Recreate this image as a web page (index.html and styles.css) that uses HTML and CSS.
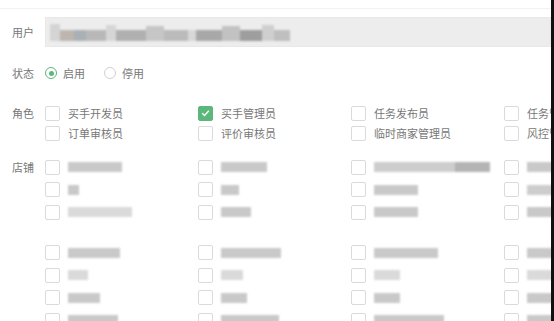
FILE: index.html
```html
<!DOCTYPE html>
<html lang="zh">
<head>
    <meta charset="UTF-8">
    <title>用户设置</title>
    <link rel="stylesheet" href="styles.css">
</head>
<body>
<div class="page">
    <div class="topline"></div>

    <div class="row row-user">
        <div class="label">用户</div>
        <div class="input">
            <div class="mosaic">
                <span class="m1"></span><span class="m2"></span><span class="m3"></span><span class="m4"></span>
                <span class="m5"></span><span class="m6"></span><span class="m7"></span><span class="m8"></span>
                <span class="m9"></span><span class="m10"></span><span class="m11"></span><span class="m12"></span>
                <span class="m13"></span><span class="m14"></span>
            </div>
        </div>
    </div>

    <div class="row row-status">
        <div class="label">状态</div>
        <label class="radio on"><span class="dot"></span>启用</label>
        <label class="radio"><span class="dot"></span>停用</label>
    </div>

    <div class="row row-role">
        <div class="label">角色</div>
        <div class="grid">
            <div class="item"><span class="box"></span>买手开发员</div>
            <div class="item"><span class="box checked"><svg viewBox="0 0 14 14" width="14" height="14"><path d="M3.5 7.2 L6 9.6 L10.6 4.6" fill="none" stroke="#fff" stroke-width="1.5"/></svg></span>买手管理员</div>
            <div class="item"><span class="box"></span>任务发布员</div>
            <div class="item"><span class="box"></span>任务管理员</div>
            <div class="item"><span class="box"></span>订单审核员</div>
            <div class="item"><span class="box"></span>评价审核员</div>
            <div class="item"><span class="box"></span>临时商家管理员</div>
            <div class="item"><span class="box"></span>风控管理员</div>
        </div>
    </div>

    <div class="row row-store">
        <div class="label">店铺</div>
        <div>
            <div class="grid store">
                <div class="item"><span class="box"></span><span class="bar" style="width:54px"></span></div>
                <div class="item"><span class="box"></span><span class="bar" style="width:46px"></span></div>
                <div class="item"><span class="box"></span><span class="bar dark" style="width:116px"></span></div>
                <div class="item"><span class="box"></span><span class="bar" style="width:40px"></span></div>
                <div class="item"><span class="box"></span><span class="bar" style="width:11px"></span></div>
                <div class="item"><span class="box"></span><span class="bar" style="width:18px"></span></div>
                <div class="item"><span class="box"></span><span class="bar" style="width:44px"></span></div>
                <div class="item"><span class="box"></span><span class="bar dark" style="width:40px"></span></div>
                <div class="item"><span class="box"></span><span class="bar light" style="width:64px"></span></div>
                <div class="item"><span class="box"></span><span class="bar" style="width:30px"></span></div>
                <div class="item"><span class="box"></span><span class="bar" style="width:44px"></span></div>
                <div class="item"><span class="box"></span><span class="bar" style="width:40px"></span></div>
            </div>
            <div class="grid store group2">
                <div class="item"><span class="box"></span><span class="bar" style="width:52px"></span></div>
                <div class="item"><span class="box"></span><span class="bar" style="width:60px"></span></div>
                <div class="item"><span class="box"></span><span class="bar" style="width:64px"></span></div>
                <div class="item"><span class="box"></span><span class="bar" style="width:40px"></span></div>
                <div class="item"><span class="box"></span><span class="bar light" style="width:20px"></span></div>
                <div class="item"><span class="box"></span><span class="bar light" style="width:22px"></span></div>
                <div class="item"><span class="box"></span><span class="bar light" style="width:26px"></span></div>
                <div class="item"><span class="box"></span><span class="bar light" style="width:40px"></span></div>
                <div class="item"><span class="box"></span><span class="bar" style="width:32px"></span></div>
                <div class="item"><span class="box"></span><span class="bar" style="width:26px"></span></div>
                <div class="item"><span class="box"></span><span class="bar" style="width:26px"></span></div>
                <div class="item"><span class="box"></span><span class="bar" style="width:40px"></span></div>
                <div class="item"><span class="box"></span><span class="bar" style="width:50px"></span></div>
                <div class="item"><span class="box"></span><span class="bar" style="width:58px"></span></div>
                <div class="item"><span class="box"></span><span class="bar" style="width:70px"></span></div>
                <div class="item"><span class="box"></span><span class="bar" style="width:40px"></span></div>
            </div>
        </div>
    </div>
</div>
</body>
</html>
```

FILE: styles.css
```css
body {
    margin: 0;
    font-family: "Noto Sans CJK SC", "Noto Sans", sans-serif;
    font-size: 11px;
    color: #777;
    background: #fff;
}

.page {
    width: 551px;
    height: 321px;
    border-right: 3px solid #111;
    overflow: hidden;
}

.topline {
    height: 8px;
    border-bottom: 1px solid #f2f2f2;
}

/* Rows */
.row {
    display: flex;
}

.label {
    width: 33px;
    padding-left: 12px;
    flex-shrink: 0;
    color: #777;
}

.row-user {
    margin-top: 8px;
    align-items: center;
    height: 30px;
}

.input {
    flex: 1;
    height: 28px;
    background: #ededed;
    border: 1px solid #e8e8e8;
    display: flex;
    align-items: center;
}

.mosaic {
    display: flex;
    align-items: flex-end;
    margin-left: 4px;
    height: 18px;
    filter: blur(1px);
}

.mosaic span {
    display: block;
    height: 11px;
}

.m1 { width: 10px; background: #d4d4d4; height: 17px !important; }
.m2 { width: 14px; background: #bdb6af; }
.m3 { width: 12px; background: #a9b0b6; }
.m4 { width: 20px; background: #b8b8b8; }
.m5 { width: 10px; background: #d6d6d6; height: 16px !important; }
.m6 { width: 30px; background: #b0b0b0; }
.m7 { width: 18px; background: #c6c6c6; height: 15px !important; }
.m8 { width: 24px; background: #bbbbbb; }
.m9 { width: 8px; background: #d8d8d8; }
.m10 { width: 26px; background: #a8a8a8; }
.m11 { width: 18px; background: #c2c2c2; height: 15px !important; }
.m12 { width: 22px; background: #9e9e9e; }
.m13 { width: 12px; background: #cfcfcf; height: 16px !important; }
.m14 { width: 16px; background: #bfbfbf; }

/* Radios */
.row-status {
    margin-top: 16px;
    height: 20px;
    align-items: center;
}

.radio {
    display: flex;
    align-items: center;
    margin-right: 19px;
}

.radio .dot {
    width: 10px;
    height: 10px;
    border: 1px solid #d0d0d0;
    border-radius: 50%;
    margin-right: 6px;
    position: relative;
}

.radio.on .dot {
    border-color: #5cb87a;
}

.radio.on .dot::after {
    content: "";
    position: absolute;
    left: 2.5px;
    top: 2.5px;
    width: 5px;
    height: 5px;
    border-radius: 50%;
    background: #5cb87a;
}

/* Checkbox grids */
.row-role {
    margin-top: 20px;
}

.row-role .label,
.row-store .label {
    line-height: 20px;
}

.grid {
    display: grid;
    grid-template-columns: repeat(4, 153px);
}

.item {
    display: flex;
    align-items: center;
    height: 20px;
    white-space: nowrap;
}

.box {
    width: 13px;
    height: 13px;
    border: 1px solid #dadada;
    border-radius: 2px;
    margin-right: 8px;
    flex-shrink: 0;
    display: flex;
    align-items: center;
    justify-content: center;
}

.box.checked {
    background: #5cb87a;
    border-color: #5cb87a;
}

.row-store {
    margin-top: 13px;
}

.row-store .label {
    line-height: 22px;
}

.store .item {
    height: 22.5px;
}

.group2 {
    margin-top: 18px;
}

.bar {
    display: block;
    height: 10px;
    background: #c9c9c9;
    filter: blur(1.2px);
}

.bar.dark {
    background: linear-gradient(90deg, #cdcdcd 0 70%, #b4b4b4 70% 100%);
}

.bar.light {
    background: #dadada;
}
```
